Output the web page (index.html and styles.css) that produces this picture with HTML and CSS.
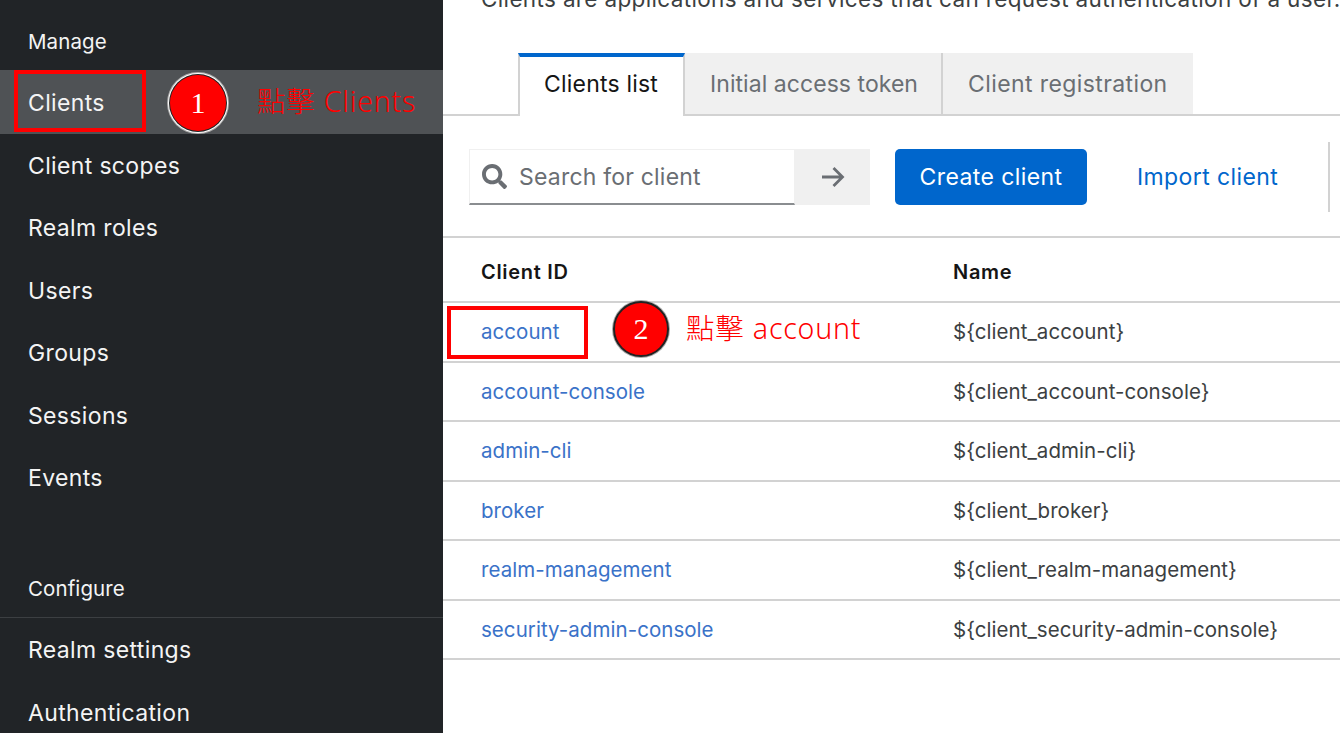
FILE: index.html
```html
<!DOCTYPE html>
<html lang="en">
<head>
    <meta charset="UTF-8">
    <meta name="viewport" content="width=device-width, initial-scale=1.0">
    <title>Clients</title>
    <link rel="stylesheet" href="styles.css">
</head>
<body>
    <div class="page">
        <nav class="sidebar">
            <div class="nav-title">Manage</div>
            <a class="nav-item active">Clients</a>
            <a class="nav-item">Client scopes</a>
            <a class="nav-item">Realm roles</a>
            <a class="nav-item">Users</a>
            <a class="nav-item">Groups</a>
            <a class="nav-item">Sessions</a>
            <a class="nav-item">Events</a>
            <div class="nav-title nav-title-second">Configure</div>
            <a class="nav-item">Realm settings</a>
            <a class="nav-item">Authentication</a>
        </nav>
        <main class="content">
            <p class="intro">Clients are applications and services that can request authentication of a user.</p>
            <div class="tabs">
                <a class="tab current">Clients list</a>
                <a class="tab">Initial access token</a>
                <a class="tab">Client registration</a>
            </div>
            <div class="toolbar">
                <div class="search">
                    <svg class="search-icon" viewBox="0 0 512 512"><path d="M505 442.700L405.300 343c-4.500-4.500-10.600-7-17-7H372c27.600-35.300 44-79.700 44-128C416 93.100 322.900 0 208 0S0 93.100 0 208s93.100 208 208 208c48.300 0 92.700-16.400 128-44v16.300c0 6.400 2.500 12.500 7 17l99.700 99.700c9.400 9.400 24.600 9.400 33.900 0l28.300-28.300c9.400-9.400 9.400-24.600.1-34zM208 336c-70.700 0-128-57.200-128-128 0-70.700 57.200-128 128-128 70.700 0 128 57.200 128 128 0 70.700-57.200 128-128 128z"/></svg>
                    <span class="placeholder">Search for client</span>
                </div>
                <button class="arrow-btn" type="button">
                    <svg viewBox="0 0 24 24"><path d="M1 12h20M12.500 3l9 9-9 9" fill="none" stroke="#6a6e73" stroke-width="2.800"/></svg>
                </button>
                <button class="create-btn" type="button">Create client</button>
                <a class="import-link">Import client</a>
                <span class="toolbar-sep"></span>
            </div>
            <table class="clients">
                <thead>
                    <tr><th class="col-id">Client ID</th><th>Name</th></tr>
                </thead>
                <tbody>
                    <tr><td><a>account</a></td><td>${client_account}</td></tr>
                    <tr><td><a>account-console</a></td><td>${client_account-console}</td></tr>
                    <tr><td><a>admin-cli</a></td><td>${client_admin-cli}</td></tr>
                    <tr><td><a>broker</a></td><td>${client_broker}</td></tr>
                    <tr><td><a>realm-management</a></td><td>${client_realm-management}</td></tr>
                    <tr><td><a>security-admin-console</a></td><td>${client_security-admin-console}</td></tr>
                </tbody>
            </table>
        </main>
    </div>

    <!-- notas rojas encima de la captura -->
    <div class="mark mark-clients"></div>
    <div class="step step-one">1</div>
    <div class="note note-clients">點擊 Clients</div>
    <div class="mark mark-account"></div>
    <div class="step step-two">2</div>
    <div class="note note-account">點擊 account</div>
</body>
</html>
```

FILE: styles.css
```css
html, body {
    margin: 0;
    height: 733px;
    overflow: hidden;
}
body {
    position: relative;
    background: #fff;
    font-family: Inter, "Open Sans", sans-serif;
    color: #151515;
}
.page {
    display: flex;
    height: 733px;
}

/* sidebar */
.sidebar {
    width: 443px;
    flex: none;
    background: #212427;
    color: #f4f4f4;
    padding-top: 10px;
    box-sizing: border-box;
    overflow: hidden;
}
.nav-title {
    height: 60px;
    line-height: 63px;
    padding-left: 28px;
    font-size: 20.5px;
    letter-spacing: 0.1px;
}
.nav-title-second {
    margin-top: 49.500px;
    height: 60px;
    border-bottom: 1px solid #3c3f42;
    line-height: 63px;
}
.nav-item {
    display: block;
    height: 62.5px;
    line-height: 67px;
    padding-left: 28px;
    font-size: 23px;
    letter-spacing: 0.35px;
}
.nav-title-second + .nav-item {
    margin-top: -1px;
}
.active {
    background: #4f5255;
    box-shadow: 0 1px 0 #4f5255;
}

/* main */
.content {
    flex: 1;
    min-width: 0;
    overflow: hidden;
}
.intro {
    margin: -16px 0 0 38px;
    height: 69px;
    line-height: 30px;
    font-size: 22.5px;
    letter-spacing: 0.35px;
    white-space: nowrap;
    color: #3c3f42;
}
.tabs {
    display: flex;
    height: 63px;
    padding-left: 75px;
    border-bottom: 2px solid #d2d2d2;
    box-sizing: border-box;
}
.tab {
    height: 61px;
    line-height: 63px;
    padding: 0 23px 0 25px;
    font-size: 23px;
    letter-spacing: 0.05px;
    color: #6a6e73;
    background: #f0f0f0;
    border-right: 2px solid #d2d2d2;
}
.tab:last-child {
    padding-right: 25px;
    border-right: 0;
    letter-spacing: 0.4px;
}
.current {
    height: 63px;
    box-sizing: border-box;
    padding: 0 25px 0 24px;
    line-height: 55px;
    letter-spacing: 0.2px;
    color: #151515;
    background: #fff;
    border-top: 4px solid #06c;
    border-left: 2px solid #d2d2d2;
}
.toolbar {
    display: flex;
    align-items: center;
    height: 122px;
    padding: 2px 0 0 26px;
    border-bottom: 2px solid #d2d2d2;
    box-sizing: border-box;
}
.search {
    display: flex;
    align-items: center;
    width: 326px;
    height: 56px;
    box-sizing: border-box;
    border: 1px solid #f0f0f0;
    border-bottom: 2px solid #8a8d90;
    padding-left: 12px;
}
.search-icon {
    width: 25px;
    height: 25px;
    fill: #6a6e73;
}
.placeholder {
    margin-left: 12px;
    font-size: 23px;
    letter-spacing: 0.2px;
    color: #6a6e73;
}
.arrow-btn {
    width: 75px;
    height: 56px;
    border: 0;
    padding: 0;
    background: #f0f0f0;
}
.arrow-btn svg {
    display: block;
    width: 24px;
    height: 24px;
    margin: auto;
}
.create-btn {
    width: 192px;
    height: 56px;
    margin-left: 25px;
    border: 0;
    border-radius: 5px;
    background: #06c;
    color: #fff;
    font-family: inherit;
    font-size: 23px;
    letter-spacing: 0.4px;
}
.import-link {
    margin-left: 50px;
    font-size: 23px;
    letter-spacing: 0.4px;
    color: #06c;
}
.toolbar-sep {
    width: 2px;
    height: 70px;
    margin-left: 50px;
    background: #d2d2d2;
}
.clients {
    width: 100%;
    border-collapse: collapse;
    table-layout: fixed;
}
.clients th {
    height: 64px;
    padding: 5px 0 0;
    text-align: left;
    font-size: 20px;
    font-weight: 600;
    letter-spacing: 0.7px;
    border-bottom: 2px solid #d2d2d2;
    box-sizing: border-box;
}
.col-id {
    width: 510px;
}
.clients th:first-child, .clients td:first-child {
    padding-left: 38px;
}
.clients td {
    height: 59.5px;
    padding: 0;
    font-size: 20.5px;
    letter-spacing: 0.05px;
    color: #3c3f42;
    border-bottom: 2px solid #d2d2d2;
    box-sizing: border-box;
}
.clients a {
    color: #3a72c8;
}

/* notas */
.mark {
    position: absolute;
    box-sizing: border-box;
    border: 4px solid #f00;
}
.mark-clients {
    left: 14px;
    top: 70px;
    width: 132px;
    height: 62px;
}
.mark-account {
    left: 447px;
    top: 306px;
    width: 141px;
    height: 53px;
}
.step {
    position: absolute;
    box-sizing: border-box;
    width: 56px;
    height: 56px;
    border-radius: 50%;
    background: #f00;
    color: #fff;
    text-align: center;
    line-height: 56px;
    font-family: "Liberation Serif", serif;
    font-size: 30px;
}
.step-one {
    left: 170px;
    top: 75px;
    box-shadow: 0 0 0 1px #222, 0 0 0 2px #fff, 0 0 0 3px #aaa;
}
.step-two {
    left: 613px;
    top: 301px;
    border: 2px solid #222;
    line-height: 52px;
    box-shadow: 0 0 0 1px #aaa;
}
.note {
    position: absolute;
    color: #f00;
    font-family: "Noto Sans", "Noto Sans CJK TC", sans-serif;
    font-size: 28.5px;
    font-weight: 300;
    letter-spacing: 0.8px;
    line-height: 40px;
    white-space: nowrap;
}
.note-clients {
    left: 257px;
    top: 81px;
}
.note-account {
    left: 686px;
    top: 308px;
}
```
